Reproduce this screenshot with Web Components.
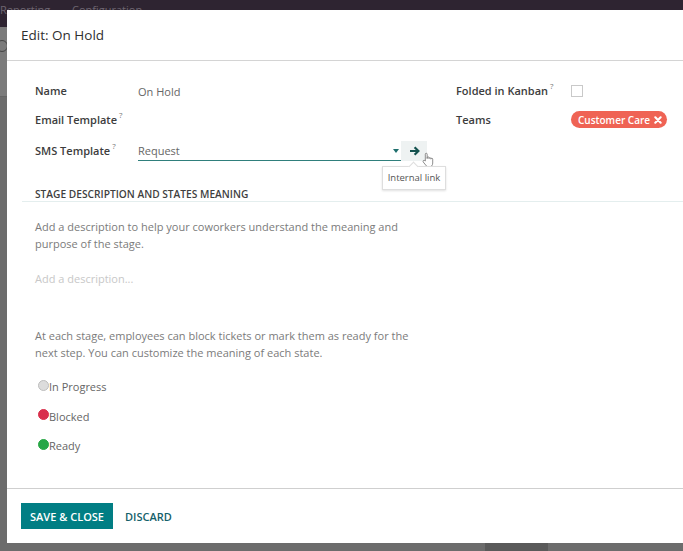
<!DOCTYPE html>
<html>
<head>
<meta charset="utf-8">
<title>Edit: On Hold</title>
<style>
  html, body { margin: 0; height: 100%; }
  body { overflow: hidden; font-family: "Open Sans", "Noto Sans", sans-serif; }
</style>
</head>
<body>
<app-backdrop>
  <stage-dialog heading="Edit: On Hold">
    <stage-form></stage-form>
    <stage-notes></stage-notes>
    <dialog-footer slot="footer"></dialog-footer>
  </stage-dialog>
</app-backdrop>

<script>
// Greyed out app behind the modal
class AppBackdrop extends HTMLElement {
  constructor() {
    super();
    this.attachShadow({ mode: 'open' });
    this.shadowRoot.innerHTML = `
    <style>
      :host {
        display: block;
        position: relative;
        width: 683px;
        height: 551px;
        overflow: hidden;
        background: #6c6c6c;
        box-sizing: border-box;
        padding: 10px 0 8px 7px;
      }
      .navbar {
        position: absolute;
        left: 0;
        top: 0;
        width: 100%;
        height: 27px;
        background: #2e2431;
        color: #6d6570;
        font-size: 11px;
        line-height: 20px;
        white-space: nowrap;
      }
      .navbar span { position: absolute; top: 0; }
      .panel {
        position: absolute;
        left: 0;
        top: 27px;
        width: 100%;
        height: 70px;
        box-sizing: border-box;
        background: #7b7b7b;
        border-bottom: 1px solid #656565;
      }
      .panel::before {
        content: "";
        position: absolute;
        left: -4px;
        top: 13px;
        width: 10px;
        height: 10px;
        border: 1px solid #454545;
        border-radius: 50%;
      }
      .ghost {
        position: absolute;
        left: 485px;
        bottom: 0;
        width: 63px;
        height: 8px;
        background: #5a5a5a;
      }
      .slot-wrap { position: relative; height: 100%; }
    </style>
    <div class="navbar"><span style="left:0">Reporting</span><span style="left:72px">Configuration</span></div>
    <div class="panel"></div>
    <div class="ghost"></div>
    <div class="slot-wrap"><slot></slot></div>
    `;
  }
}

class StageDialog extends HTMLElement {
  constructor() {
    super();
    this.attachShadow({ mode: 'open' });
  }

  connectedCallback() {
    this.shadowRoot.innerHTML = `
    <style>
      :host {
        display: flex;
        flex-direction: column;
        height: 100%;
        background: #fff;
        color: #4c4c4c;
      }
      header {
        flex: none;
        height: 51px;
        box-sizing: border-box;
        border-bottom: 1px solid #d4d4d4;
        padding: 0 14px;
        display: flex;
        align-items: center;
        font-size: 13.5px;
        font-weight: 500;
        color: #2f2f2f;
      }
      main { flex: 1; min-height: 0; }
      footer { flex: none; }
    </style>
    <header>${this.getAttribute('heading') || ''}</header>
    <main><slot></slot></main>
    <footer><slot name="footer"></slot></footer>
    `;
  }
}

class HelpLabel extends HTMLElement {
  constructor() {
    super();
    this.attachShadow({ mode: 'open' });
    this.shadowRoot.innerHTML = `
    <style>
      :host {
        display: block;
        font-size: 11px;
        font-weight: 600;
        color: #3d3d3d;
        white-space: nowrap;
        line-height: 16px;
      }
      sup {
        font-size: 8px;
        font-weight: 400;
        color: #777;
        line-height: 0;
        margin-left: 2px;
        position: relative;
        top: -1px;
        vertical-align: super;
      }
    </style>
    <slot></slot><sup hidden>?</sup>
    `;
  }

  connectedCallback() {
    this.shadowRoot.querySelector('sup').hidden = !this.hasAttribute('help');
  }
}

class TagPill extends HTMLElement {
  constructor() {
    super();
    this.attachShadow({ mode: 'open' });
    this.shadowRoot.innerHTML = `
    <style>
      :host {
        display: flex;
        align-items: center;
        gap: 4px;
        width: 96px;
        height: 17px;
        box-sizing: border-box;
        padding: 0 5px 0 7px;
        border-radius: 9px;
        background: #ef6354;
        color: #fff;
        font-size: 10px;
        font-weight: 600;
        white-space: nowrap;
      }
      svg { width: 8px; height: 8px; display: block; }
    </style>
    <slot></slot>
    <svg viewBox="0 0 8 8"><path d="M1.3 1.3L6.7 6.7M6.7 1.3L1.3 6.7" stroke="#fff" stroke-width="2.1" stroke-linecap="round"/></svg>
    `;
  }
}

class StageForm extends HTMLElement {
  constructor() {
    super();
    this.attachShadow({ mode: 'open' });
    this.shadowRoot.innerHTML = `
    <style>
      :host {
        display: grid;
        grid-template-columns: 103px 263px 55px 115px 1fr;
        grid-template-rows: 29px 29px 33px;
        align-content: start;
        padding: 15px 0 0 28px;
        height: 110px;
        box-sizing: content-box;
        align-items: center;
      }
      .value { font-size: 11px; color: #666; line-height: 16px; }
      .name-value { margin-top: 2px; }
      .select {
        align-self: start;
        display: flex;
        align-items: center;
        justify-content: space-between;
        box-sizing: border-box;
        height: 20px;
        margin-top: 7px;
        border-bottom: 1px solid #2f7f7c;
        padding-right: 2px;
      }
      .caret {
        width: 0; height: 0;
        border-left: 3.5px solid transparent;
        border-right: 3.5px solid transparent;
        border-top: 4px solid #1f6f6d;
      }
      .link-cell { position: relative; align-self: stretch; }
      .link-btn {
        width: 26px;
        height: 20px;
        margin-top: 7px;
        background: #eef2f2;
        display: flex;
        align-items: center;
        justify-content: center;
      }
      .link-btn svg { width: 11px; height: 10px; display: block; }
      .cursor { position: absolute; left: 21px; top: 18px; width: 12px; height: 16px; }
      .tooltip {
        position: absolute;
        left: -19px;
        top: 32px;
        width: 64px;
        height: 24px;
        box-sizing: border-box;
        background: #fff;
        border: 1px solid #dedede;
        box-shadow: 0 1px 2px rgba(0,0,0,.12);
        font-size: 9.5px;
        line-height: 22px;
        text-align: center;
        color: #555;
        white-space: nowrap;
      }
      .tooltip::before {
        content: "";
        position: absolute;
        left: 27px;
        top: -4px;
        width: 6px;
        height: 6px;
        background: #fff;
        border-left: 1px solid #dedede;
        border-top: 1px solid #dedede;
        transform: rotate(45deg);
      }
      .check {
        width: 12px;
        height: 12px;
        box-sizing: border-box;
        border: 1px solid #c9c9c9;
      }
    </style>
    <help-label>Name</help-label>
    <div class="value name-value">On Hold</div>
    <div></div>
    <help-label help>Folded in Kanban</help-label>
    <div class="check"></div>

    <help-label help>Email Template</help-label>
    <div></div>
    <div></div>
    <help-label>Teams</help-label>
    <tag-pill>Customer Care</tag-pill>

    <help-label help>SMS Template</help-label>
    <div class="select"><span class="value">Request</span><span class="caret"></span></div>
    <div class="link-cell">
      <div class="link-btn">
        <svg viewBox="0 0 11 10"><path d="M1 5H9M5.6 1.2L9.4 5L5.6 8.8" fill="none" stroke="#14524f" stroke-width="2.2"/></svg>
      </div>
      <svg class="cursor" viewBox="0 0 13 17"><path d="M3.6 9.6V2.2a1 1 0 0 1 2 0V7V6a1 1 0 0 1 2 0v1a1 1 0 0 1 2 0v.6a1 1 0 0 1 2 0v4.2c0 2.4-1.4 4.2-3.6 4.2H7.2c-1.5 0-2.4-.8-3.2-2L1.3 10.6c-.8-1.3.8-2.4 1.8-1.4z" fill="#fff" stroke="#777" stroke-width=".9"/></svg>
      <div class="tooltip">Internal link</div>
    </div>
    `;
  }
}

class StateRow extends HTMLElement {
  constructor() {
    super();
    this.attachShadow({ mode: 'open' });
  }

  connectedCallback() {
    const color = this.getAttribute('color');
    const edge = this.getAttribute('edge') || color;
    this.shadowRoot.innerHTML = `
    <style>
      :host {
        display: flex;
        align-items: center;
        height: 29.5px;
        padding-left: 3px;
        font-size: 11px;
        color: #666;
      }
      i {
        width: 11px;
        height: 11px;
        box-sizing: border-box;
        border-radius: 50%;
        border: 1px solid ${edge};
        background: ${color};
        margin-top: -3px;
      }
    </style>
    <i></i><slot></slot>
    `;
  }
}

class StageNotes extends HTMLElement {
  constructor() {
    super();
    this.attachShadow({ mode: 'open' });
    this.shadowRoot.innerHTML = `
    <style>
      :host {
        display: block;
        font-size: 11px;
        color: #7b7b7b;
      }
      h3 {
        margin: 0 0 0 15px;
        padding: 0 0 0 13px;
        height: 16px;
        font-size: 10.2px;
        line-height: 16px;
        font-weight: 600;
        color: #3f3f3f;
        border-bottom: 1px solid #e4eeee;
        box-sizing: border-box;
      }
      .body { padding: 16px 0 0 28px; }
      p { margin: 0; line-height: 17px; width: 385px; }
      .placeholder { color: #c8c8c8; margin-top: 18px; }
      .meaning { margin-top: 40px; }
      .states { margin-top: 11px; }
    </style>
    <h3>STAGE DESCRIPTION AND STATES MEANING</h3>
    <div class="body">
      <p>Add a description to help your coworkers understand the meaning and purpose of the stage.</p>
      <p class="placeholder">Add a description...</p>
      <p class="meaning">At each stage, employees can block tickets or mark them as ready for the next step. You can customize the meaning of each state.</p>
      <div class="states">
        <state-row color="#dcdcdc" edge="#bdbdbd">In Progress</state-row>
        <state-row color="#d9304c">Blocked</state-row>
        <state-row color="#28a745">Ready</state-row>
      </div>
    </div>
    `;
  }
}

class DialogFooter extends HTMLElement {
  constructor() {
    super();
    this.attachShadow({ mode: 'open' });
    this.shadowRoot.innerHTML = `
    <style>
      :host {
        display: flex;
        align-items: center;
        gap: 12px;
        height: 55px;
        box-sizing: border-box;
        border-top: 1px solid #cfcfcf;
        padding: 0 14px;
        font-size: 11px;
        font-weight: 600;
      }
      .primary {
        width: 92px;
        height: 26px;
        display: flex;
        align-items: center;
        justify-content: center;
        background: #017e84;
        color: #fff;
      }
      .link { color: #14616a; }
    </style>
    <div class="primary">SAVE &amp; CLOSE</div>
    <div class="link">DISCARD</div>
    `;
  }
}

customElements.define('app-backdrop', AppBackdrop);
customElements.define('stage-dialog', StageDialog);
customElements.define('help-label', HelpLabel);
customElements.define('tag-pill', TagPill);
customElements.define('stage-form', StageForm);
customElements.define('state-row', StateRow);
customElements.define('stage-notes', StageNotes);
customElements.define('dialog-footer', DialogFooter);
</script>
</body>
</html>
